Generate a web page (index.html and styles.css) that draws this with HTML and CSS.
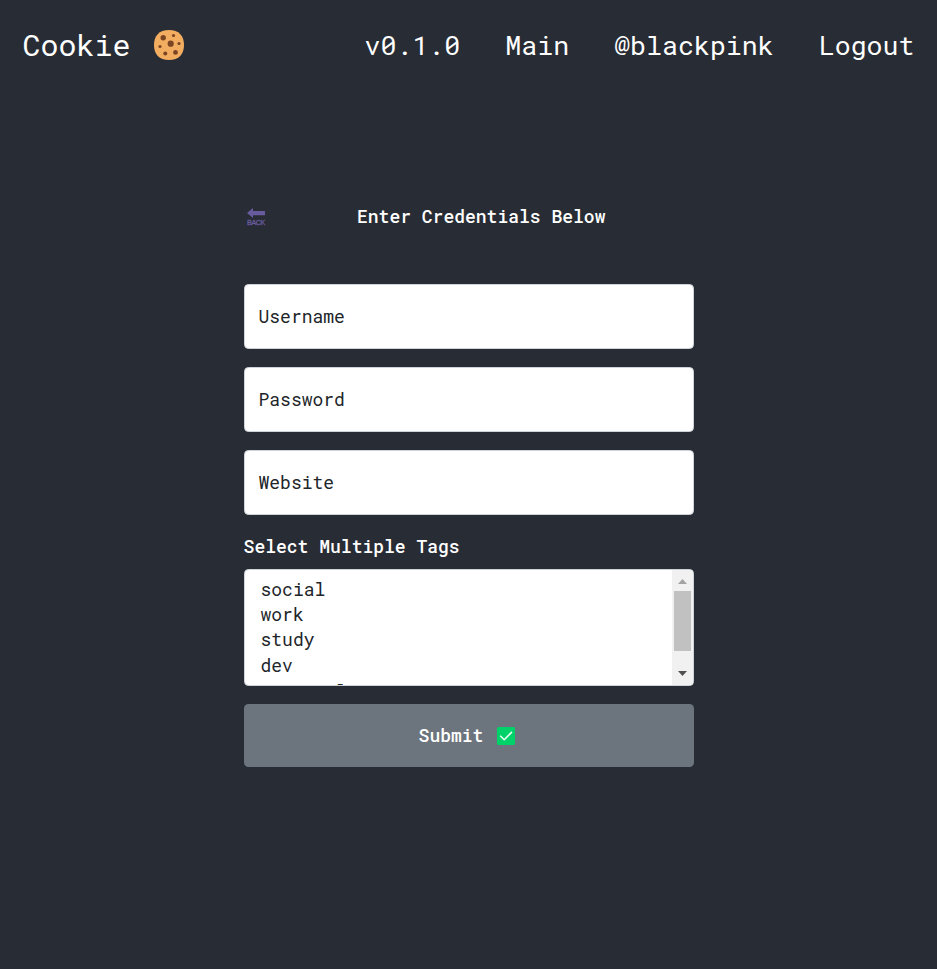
FILE: index.html
```html
<!DOCTYPE html>
<html lang="en">
<head>
<meta charset="utf-8">
<title>Cookie</title>
<link rel="stylesheet" href="styles.css">
</head>
<body>
<header class="navbar">
  <a class="brand"><span>Cookie</span>
    <svg class="cookie" viewBox="0 0 30 30" aria-hidden="true">
      <path fill="#f3ad61" d="M15 0C25 0 30 6 30 15S25 30 15 30 0 24 0 15 5 0 15 0Z"/>
      <g fill="#7b4524"><circle cx="9.2" cy="7.8" r="2.7"/><circle cx="19.5" cy="5.5" r="1.6"/><circle cx="16.7" cy="13.7" r="3.1"/><circle cx="25" cy="13.5" r="1.6"/><circle cx="6" cy="16.5" r="1.6"/><circle cx="11.3" cy="23.5" r="2"/><circle cx="21.5" cy="22.4" r="2.4"/></g>
    </svg>
  </a>
  <nav class="links"><a>v0.1.0</a><a>Main</a><a>@blackpink</a><a>Logout</a></nav>
</header>
<main class="form">
  <div class="heading">
    <a class="back">
      <svg viewBox="0 0 18 10" aria-hidden="true"><path fill="#675b9d" d="M0 5 6 0V3H18V7.3H6V10Z"/></svg>
      <span>BACK</span>
    </a>
    <h1>Enter Credentials Below</h1>
  </div>
  <div class="field">Username</div>
  <div class="field">Password</div>
  <div class="field">Website</div>
  <div class="label">Select Multiple Tags</div>
  <div class="listbox">
    <div class="options"><div>social</div><div>work</div><div>study</div><div>dev</div><div>personal</div></div>
    <div class="scrollbar">
      <svg viewBox="0 0 9 5" aria-hidden="true"><path fill="#a3a3a3" d="M0 5 4.5 0 9 5Z"/></svg>
      <div class="thumb"></div>
      <svg class="down" viewBox="0 0 9 5" aria-hidden="true"><path fill="#505050" d="M0 0H9L4.5 5Z"/></svg>
    </div>
  </div>
  <button class="submit"><span>Submit</span>
    <svg viewBox="0 0 18 18" aria-hidden="true"><rect width="18" height="18" rx="1.5" fill="#00d26a"/><path d="M3.7 9.2 7.2 12.7 14.5 5.4" fill="none" stroke="#e8fff2" stroke-width="1.6" stroke-linecap="round" stroke-linejoin="round"/></svg>
  </button>
</main>
</body>
</html>
```
FILE: styles.css
```css
* { box-sizing: border-box; }
body {
  margin: 0;
  min-height: 969px;
  background: #282c34;
  color: #fff;
  font: 18px/27px "Roboto Mono", "Noto Sans Mono", "DejaVu Sans Mono", "Liberation Mono", monospace;
}
.navbar { display: flex; justify-content: space-between; align-items: center; height: 90px; padding: 0 22.5px; }
.brand { display: flex; align-items: center; gap: 23.5px; font-size: 30px; line-height: 45px; }
.brand span { margin-top: -2px; }
.cookie { width: 30px; height: 30px; }
.links { display: flex; gap: 45px; font-size: 26.6px; line-height: 40px; }
.form { width: 450px; margin: 113px 0 0 244px; }
.heading { display: flex; align-items: center; height: 27px; margin-bottom: 54px; }
.back { display: flex; flex-direction: column; align-items: center; width: 18px; margin: 1px 0 0 3px; color: #675b9d; font: 7.2px/9px "Liberation Sans", sans-serif; letter-spacing: -.4px; -webkit-text-stroke: .3px #675b9d; }
.back svg { width: 18px; height: 10px; }
h1 { margin: 0 0 0 92px; font-size: 18px; line-height: 27px; font-weight: 480; }
.field { height: 65px; margin-bottom: 18px; padding: 18px 13.5px; background: #fff; border: 1px solid #ced4da; border-radius: 4.5px; color: #212529; font-weight: 370; }
.label { margin: 0 0 9px -.4px; font-weight: 480; }
.listbox { display: flex; height: 117px; overflow: hidden; background: #fff; border: 1px solid #ced4da; border-radius: 4.5px; color: #212529; }
.options { flex: 1; padding: 7px 15.5px; line-height: 25.2px; font-weight: 370; }
.options div:last-child { margin-top: 1px; }
.scrollbar { display: flex; flex-direction: column; align-items: center; width: 21px; padding: 9px 0; background: #f1f1f1; }
.scrollbar svg { width: 9px; height: 5px; flex: none; }
.scrollbar .down { margin-top: auto; }
.thumb { width: 17px; height: 60px; margin-top: 7px; background: #c1c1c1; }
.submit { display: flex; align-items: center; justify-content: center; gap: 14px; width: 450px; height: 63px; margin-top: 18px; padding: 0 4px 0 0; border: 0; border-radius: 4.5px; background: #6c757d; color: #fff; font: inherit; font-weight: 480; }
.submit svg { width: 18px; height: 18px; }
```
